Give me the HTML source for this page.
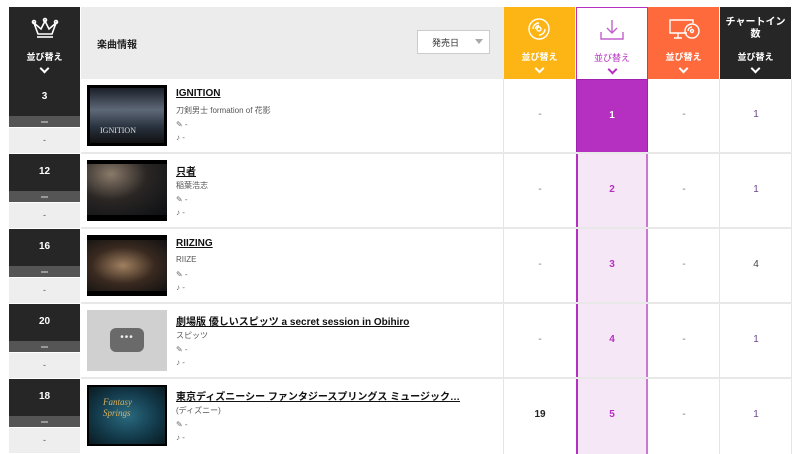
<!DOCTYPE html>
<html><head><meta charset="utf-8"><style>
*{margin:0;padding:0;box-sizing:border-box}
body{width:800px;height:450px;background:#fff;position:relative;overflow:hidden;font-family:"Liberation Sans","Noto Sans CJK JP",sans-serif;color:#222}
.a{position:absolute}
.hd{position:absolute;top:7px;height:72px;text-align:center;color:#fff;font-weight:bold;font-size:9px}
.hd .s{position:absolute;left:0;right:0;top:43px}
.hd .c{position:absolute;left:0;right:0;top:57px;font-size:10px}
.chev{display:inline-block;width:7px;height:7px;border-right:2px solid currentColor;border-bottom:2px solid currentColor;transform:rotate(45deg)}
.row{position:absolute;left:0;width:800px;height:75px}
.rk{position:absolute;left:9px;width:71px;top:0;height:37px;background:#262626;color:#fff;font-weight:bold;font-size:10px;text-align:center;padding-top:12px}
.rb{position:absolute;left:9px;width:71px;top:37px;height:11px;background:#555}
.rb:after{content:"";position:absolute;left:32px;top:5px;width:7px;height:2px;background:#999}
.rl{position:absolute;left:9px;width:71px;top:49px;height:25px;background:#eee;text-align:center;font-size:9px;color:#555;padding-top:7px}
.th{position:absolute;left:87px;top:6px;width:80px;height:61px;background:#111}
.ti{position:absolute;left:176px;top:9px;font-size:10px;font-weight:bold;text-decoration:underline;color:#111;white-space:nowrap}
.ar{position:absolute;left:176px;top:26px;font-size:8px;color:#555;white-space:nowrap}
.m{position:absolute;left:176px;font-size:8px;color:#666}
.cell{position:absolute;top:0;height:75px;width:72px;text-align:center;padding-top:30px;font-size:10px}
.ln{position:absolute;left:81px;width:711px;top:73px;height:2px;background:#e8e8e8}
.vl{position:absolute;top:0;height:75px;width:1px;background:#e4e4e4}
</style></head><body>
<!-- header -->
<div class="a" style="left:81px;top:7px;width:423px;height:72px;background:#ececec"></div>
<div class="a" style="left:97px;top:36px;font-size:10px;font-weight:bold">楽曲情報</div>
<div class="a" style="left:417px;top:30px;width:73px;height:24px;border:1px solid #ccc;background:#fff;font-size:9px;color:#333;padding:5px 0 0 14px">発売日<span style="position:absolute;right:6px;top:8px;border:4px solid transparent;border-top:5px solid #aaa;"></span></div>
<div class="hd" style="left:9px;width:71px;background:#262626">
<svg class="a" style="left:22px;top:10px" width="28" height="24" viewBox="0 0 28 24" fill="none" stroke="#fff" stroke-width="1.6"><path d="M3 6 L7 17 H21 L25 6 L18 12 L14 4 L10 12 Z"/><path d="M6 20 H22"/><circle cx="3" cy="5" r="1.5"/><circle cx="25" cy="5" r="1.5"/><circle cx="14" cy="3" r="1.5"/></svg>
<div class="s">並び替え</div><div class="c"><span class="chev"></span></div></div>
<div class="hd" style="left:504px;width:71px;background:#fdb515">
<svg class="a" style="left:23px;top:10px" width="24" height="24" viewBox="0 0 24 24" fill="none" stroke="#fff" stroke-width="1.4"><circle cx="12" cy="12" r="10"/><circle cx="12" cy="12" r="2"/><path d="M6 12a6 6 0 0 1 6-6M8.5 12a3.5 3.5 0 0 1 3.5-3.5M18 12a6 6 0 0 1-6 6"/></svg>
<div class="s">並び替え</div><div class="c"><span class="chev"></span></div></div>
<div class="hd" style="left:576px;width:72px;background:#fff;border:1px solid #b52fc0;border-bottom:none;color:#b52fc0">
<svg class="a" style="left:21px;top:10px" width="28" height="24" viewBox="0 0 28 24" fill="none" stroke="#c060cc" stroke-width="1.4"><path d="M14 2V15M9 10L14 15L19 10M3 14V21H25V14"/></svg>
<div class="s" style="font-weight:normal">並び替え</div><div class="c"><span class="chev"></span></div></div>
<div class="hd" style="left:648px;width:71px;background:#ff6a3d">
<svg class="a" style="left:19px;top:10px" width="34" height="26" viewBox="0 0 34 26" fill="none" stroke="#fff" stroke-width="1.4"><path d="M20 16H3V3H26V6"/><path d="M11 16V21M7 21H15"/><circle cx="25" cy="14" r="7"/><circle cx="25" cy="14" r="1.5"/><path d="M21 14a4 4 0 0 1 4-4"/></svg>
<div class="s">並び替え</div><div class="c"><span class="chev"></span></div></div>
<div class="hd" style="left:720px;width:71px;background:#262626">
<div class="a" style="left:0;right:0;top:10px;font-size:10px;line-height:12px">チャートイン<br>数</div>
<div class="s">並び替え</div><div class="c"><span class="chev"></span></div></div>

<!-- rows -->
<div class="row" style="top:79px">
<div class="rk">3</div><div class="rb"></div><div class="rl">-</div>
<div class="th" style="background:linear-gradient(#1a1f28,#5e6978 40%,#2a3340 70%,#111);border:3px solid #000"><div class="a" style="left:10px;top:38px;font-size:8px;color:#ddd;font-family:'Liberation Serif',serif">IGNITION</div></div>
<div class="ti">IGNITION</div><div class="ar">刀剣男士 formation of 花影</div>
<div class="m" style="top:41px">✎ -</div><div class="m" style="top:54px">♪ -</div>
<div class="cell" style="left:504px;color:#777">-</div>
<div class="cell" style="left:576px;background:#b52fc0;color:#fff;font-weight:bold;border:1px solid #a020b0">1</div>
<div class="cell" style="left:648px;color:#777">-</div>
<div class="cell" style="left:720px;color:#6a4a8a">1</div>
<div class="vl" style="left:503px"></div><div class="vl" style="left:719px"></div><div class="vl" style="left:791px"></div>
<div class="ln"></div></div>

<div class="row" style="top:154px">
<div class="rk">12</div><div class="rb"></div><div class="rl">-</div>
<div class="th" style="background:radial-gradient(ellipse at 30% 20%,#8a7a6a,#2a2624 45%,#0c0f14);border-top:4px solid #000;border-bottom:6px solid #000"></div>
<div class="ti">只者</div><div class="ar">稲葉浩志</div>
<div class="m" style="top:41px">✎ -</div><div class="m" style="top:54px">♪ -</div>
<div class="cell" style="left:504px;color:#777">-</div>
<div class="cell" style="left:576px;background:#f6e7f7;color:#b52fc0;font-weight:bold;border-left:2px solid #b52fc0;border-right:2px solid #cc77d4">2</div>
<div class="cell" style="left:648px;color:#777">-</div>
<div class="cell" style="left:720px;color:#6a4a8a">1</div>
<div class="vl" style="left:503px"></div><div class="vl" style="left:719px"></div><div class="vl" style="left:791px"></div>
<div class="ln"></div></div>

<div class="row" style="top:229px">
<div class="rk">16</div><div class="rb"></div><div class="rl">-</div>
<div class="th" style="background:radial-gradient(ellipse at 45% 50%,#a08060,#3a2a20 50%,#111);border-top:5px solid #000;border-bottom:5px solid #000"></div>
<div class="ti">RIIZING</div><div class="ar">RIIZE</div>
<div class="m" style="top:41px">✎ -</div><div class="m" style="top:54px">♪ -</div>
<div class="cell" style="left:504px;color:#777">-</div>
<div class="cell" style="left:576px;background:#f6e7f7;color:#b52fc0;font-weight:bold;border-left:2px solid #b52fc0;border-right:2px solid #cc77d4">3</div>
<div class="cell" style="left:648px;color:#777">-</div>
<div class="cell" style="left:720px;color:#444">4</div>
<div class="vl" style="left:503px"></div><div class="vl" style="left:719px"></div><div class="vl" style="left:791px"></div>
<div class="ln"></div></div>

<div class="row" style="top:304px">
<div class="rk">20</div><div class="rb"></div><div class="rl">-</div>
<div class="th" style="background:#d0d0d0"><div class="a" style="left:23px;top:18px;width:34px;height:24px;border-radius:6px;background:#6a6a6a;color:#eee;font-size:10px;text-align:center;line-height:20px;letter-spacing:1px">•••</div></div>
<div class="ti">劇場版 優しいスピッツ a secret session in Obihiro</div><div class="ar">スピッツ</div>
<div class="m" style="top:41px">✎ -</div><div class="m" style="top:54px">♪ -</div>
<div class="cell" style="left:504px;color:#777">-</div>
<div class="cell" style="left:576px;background:#f6e7f7;color:#b52fc0;font-weight:bold;border-left:2px solid #b52fc0;border-right:2px solid #cc77d4">4</div>
<div class="cell" style="left:648px;color:#777">-</div>
<div class="cell" style="left:720px;color:#6a4a8a">1</div>
<div class="vl" style="left:503px"></div><div class="vl" style="left:719px"></div><div class="vl" style="left:791px"></div>
<div class="ln"></div></div>

<div class="row" style="top:379px">
<div class="rk">18</div><div class="rb"></div><div class="rl">-</div>
<div class="th" style="background:radial-gradient(ellipse at 50% 50%,#2a6a80,#123848 60%,#0a1a20);border:2px solid #000"><div class="a" style="left:14px;top:10px;font-size:9px;color:#d8b060;font-family:'Liberation Serif',serif;line-height:11px;font-style:italic">Fantasy<br>Springs</div></div>
<div class="ti">東京ディズニーシー ファンタジースプリングス ミュージック…</div><div class="ar">(ディズニー)</div>
<div class="m" style="top:41px">✎ -</div><div class="m" style="top:54px">♪ -</div>
<div class="cell" style="left:504px;color:#222;font-weight:bold">19</div>
<div class="cell" style="left:576px;background:#f6e7f7;color:#b52fc0;font-weight:bold;border-left:2px solid #b52fc0;border-right:2px solid #cc77d4">5</div>
<div class="cell" style="left:648px;color:#777">-</div>
<div class="cell" style="left:720px;color:#6a4a8a">1</div>
<div class="vl" style="left:503px"></div><div class="vl" style="left:719px"></div><div class="vl" style="left:791px"></div>
</div>
</body></html>
